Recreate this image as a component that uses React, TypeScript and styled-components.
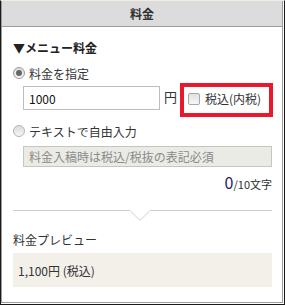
import styled, { createGlobalStyle } from 'styled-components';

const GlobalStyle = createGlobalStyle`
  html, body {
    margin: 0;
    padding: 0;
    background: #fff;
  }
  body {
    font-family: "Noto Sans CJK JP", "Noto Sans", sans-serif;
    font-size: 12px;
    color: #333;
  }
`;

const Frame = styled.div`
  width: 285px;
  height: 305px;
  box-sizing: border-box;
  border-top: 1px solid #f1ede0;
  border-left: 1px solid #1a1a1a;
  border-right: 1px solid #1a1a1a;
  border-bottom: 1px solid #1a1a1a;
  padding: 0 1px 1px 0;
`;

const Panel = styled.div`
  height: 100%;
  box-sizing: border-box;
  border: 1px solid #9c9c9c;
  border-top: none;
  display: flex;
  flex-direction: column;
`;

const Header = styled.div`
  height: 25px;
  background: #dcdcdc;
  border-bottom: 1px solid #9c9c9c;
  display: flex;
  align-items: center;
  justify-content: center;
  font-weight: bold;
  font-size: 12px;
  color: #333;
`;

const Body = styled.div`
  padding: 0 9px 0 11px;
  display: flex;
  flex-direction: column;
`;

const SectionTitle = styled.div`
  margin-top: 13px;
  line-height: 16px;
  font-weight: bold;
  color: #222;
`;

const RadioRow = styled.label<{ $top: number }>`
  margin-top: ${p => p.$top}px;
  height: 16px;
  display: flex;
  align-items: center;
  gap: 4px;
`;

const Radio = styled.span<{ $checked?: boolean }>`
  width: 12px;
  height: 12px;
  box-sizing: border-box;
  border-radius: 50%;
  border: 1px solid ${p => (p.$checked ? '#9a9a9a' : '#b4b4b4')};
  background: linear-gradient(to bottom, #dcdcdc, #f6f6f6);
  display: flex;
  align-items: center;
  justify-content: center;

  &::after {
    content: '';
    width: 6px;
    height: 6px;
    border-radius: 50%;
    background: ${p => (p.$checked ? '#666' : 'transparent')};
  }
`;

const PriceRow = styled.div`
  margin-top: 2px;
  margin-left: 10px;
  height: 34px;
  display: flex;
  align-items: flex-start;
`;

const PriceInput = styled.div`
  margin-top: 3px;
  width: 137px;
  height: 24px;
  box-sizing: border-box;
  border: 1px solid #bdbdbd;
  background: #fff;
  padding-left: 5px;
  display: flex;
  align-items: center;
  color: #111;
`;

const Yen = styled.span`
  margin: 4px 3px 0 4px;
  line-height: 16px;
  font-size: 13px;
  padding-top: 2px;
`;

const TaxBox = styled.label`
  width: 93px;
  height: 34px;
  box-sizing: border-box;
  border: 4px solid #e8192c;
  padding: 0 0 3px 4px;
  display: flex;
  align-items: center;
  gap: 5px;
  color: #333;
`;

const Checkbox = styled.span`
  width: 12px;
  height: 12px;
  box-sizing: border-box;
  border: 1px solid #a8a8a8;
  border-radius: 2px;
  background: linear-gradient(to bottom, #e0e0e0, #f7f7f7);
`;

const FreeInput = styled.div`
  margin-top: 7px;
  margin-left: 10px;
  width: 249px;
  height: 21px;
  box-sizing: border-box;
  border: 1px solid #c6c6c0;
  background: #ebebe5;
  padding-left: 5px;
  display: flex;
  align-items: center;
  color: #8a8a8a;
`;

const Counter = styled.div`
  margin-top: 3px;
  height: 20px;
  display: flex;
  align-items: baseline;
  justify-content: flex-end;
  padding-right: 1px;
`;

const CountNum = styled.span`
  font-size: 16px;
  color: #1d1d5c;
`;

const CountMax = styled.span`
  font-size: 11px;
  color: #333;
`;

const Divider = styled.svg`
  display: block;
  margin-top: 20px;
`;

const PreviewLabel = styled.div`
  margin-top: 11px;
  line-height: 16px;
  color: #333;
`;

const PreviewBox = styled.div`
  margin-top: 5px;
  width: 259px;
  height: 34px;
  background: #f3f0ea;
  padding-left: 5px;
  box-sizing: border-box;
  display: flex;
  align-items: center;
  color: #333;
`;

export default function App() {
  return (
    <>
      <GlobalStyle />
      <Frame>
        <Panel>
          <Header>料金</Header>
          <Body>
            <SectionTitle>▼メニュー料金</SectionTitle>
            <RadioRow $top={9}>
              <Radio $checked />
              料金を指定
            </RadioRow>
            <PriceRow>
              <PriceInput>1000</PriceInput>
              <Yen>円</Yen>
              <TaxBox>
                <Checkbox />
                税込(内税)
              </TaxBox>
            </PriceRow>
            <RadioRow $top={6}>
              <Radio />
              テキストで自由入力
            </RadioRow>
            <FreeInput>料金入稿時は税込/税抜の表記必須</FreeInput>
            <Counter>
              <CountNum>0</CountNum>
              <CountMax>/10文字</CountMax>
            </Counter>
            <Divider width="259" height="11" viewBox="0 0 259 11">
              <polyline
                points="0,0.5 117,0.5 127,10.5 137,0.5 259,0.5"
                fill="none"
                stroke="#cfcfcf"
                strokeWidth="1"
              />
            </Divider>
            <PreviewLabel>料金プレビュー</PreviewLabel>
            <PreviewBox>1,100円 (税込)</PreviewBox>
          </Body>
        </Panel>
      </Frame>
    </>
  );
}
